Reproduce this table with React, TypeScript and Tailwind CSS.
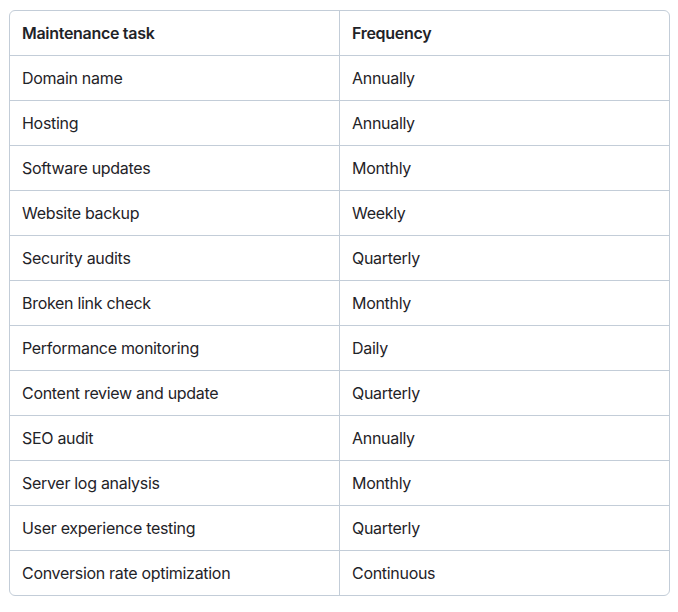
import React from "react";

const rows: [string, string][] = [
  ["Domain name", "Annually"],
  ["Hosting", "Annually"],
  ["Software updates", "Monthly"],
  ["Website backup", "Weekly"],
  ["Security audits", "Quarterly"],
  ["Broken link check", "Monthly"],
  ["Performance monitoring", "Daily"],
  ["Content review and update", "Quarterly"],
  ["SEO audit", "Annually"],
  ["Server log analysis", "Monthly"],
  ["User experience testing", "Quarterly"],
  ["Conversion rate optimization", "Continuous"],
];

export default function App() {
  return (
    <div
      className="w-[678px] h-[612px] bg-white pt-[10px] pl-[9px]"
      style={{ fontFamily: 'Inter, "Noto Sans", sans-serif' }}
    >
      <div className="w-[661px] border border-[#c3cdd8] rounded-[6px] overflow-hidden text-[16px] tracking-[-0.3px] text-[#1f2328]">
        <div className="grid grid-cols-[329px_330px] h-[44px] font-semibold">
          <div className="flex items-center pl-[12px]">Maintenance task</div>
          <div className="flex items-center pl-[12px] border-l border-[#c3cdd8]">Frequency</div>
        </div>
        {rows.map(([a, b]) => (
          <div key={a} className="grid grid-cols-[329px_330px] h-[45px] border-t border-[#c3cdd8]">
            <div className="flex items-center pl-[12px]">{a}</div>
            <div className="flex items-center pl-[12px] border-l border-[#c3cdd8]">{b}</div>
          </div>
        ))}
      </div>
    </div>
  );
}
